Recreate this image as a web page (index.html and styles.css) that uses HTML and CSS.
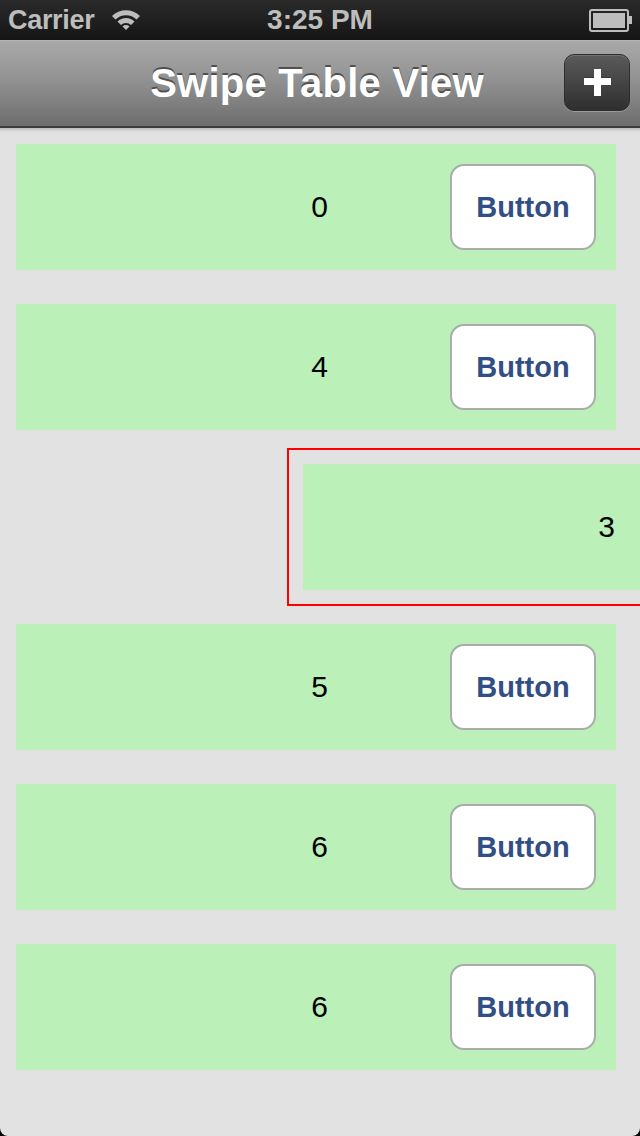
FILE: index.html
```html
<!DOCTYPE html>
<html>
<head>
<meta charset="utf-8">
<link rel="stylesheet" href="styles.css">
</head>
<body>
<div class="screen">
  <div class="statusbar">
    <div class="sb-left">
      <span class="carrier">Carrier</span>
      <svg class="wifi" width="32" height="24" viewBox="0 0 32 24">
        <path d="M2 9 A20 20 0 0 1 30 9 L26.5 12.5 A15 15 0 0 0 5.5 12.5 Z" fill="#bdbdbd"/>
        <path d="M7.5 14.5 A12 12 0 0 1 24.5 14.5 L21 18 A7 7 0 0 0 11 18 Z" fill="#bdbdbd"/>
        <path d="M12.5 19.5 A5 5 0 0 1 19.5 19.5 L16 23 Z" fill="#bdbdbd"/>
      </svg>
    </div>
    <span class="time">3:25 PM</span>
    <div class="battery"><div class="battery-body"><div class="battery-fill"></div></div><div class="battery-nub"></div></div>
  </div>
  <div class="navbar">
    <span class="title">Swipe Table View</span>
    <button class="add-btn"><span class="plus-h"></span><span class="plus-v"></span></button>
  </div>
  <div class="navshadow"></div>
  <div class="list">
    <div class="cell"><div class="card"><span class="num">0</span><span class="btn">Button</span></div></div>
    <div class="cell"><div class="card"><span class="num">4</span><span class="btn">Button</span></div></div>
    <div class="cell swiped"><div class="card"><span class="num">3</span></div></div>
    <div class="cell"><div class="card"><span class="num">5</span><span class="btn">Button</span></div></div>
    <div class="cell"><div class="card"><span class="num">6</span><span class="btn">Button</span></div></div>
    <div class="cell"><div class="card"><span class="num">6</span><span class="btn">Button</span></div></div>
  </div>
</div>
</body>
</html>
```
FILE: styles.css
```css
html, body {
  margin: 0;
  padding: 0;
  background: #000;
}
.screen {
  width: 640px;
  height: 1136px;
  overflow: hidden;
  background: #e2e2e2;
  font-family: "Liberation Sans", Arial, sans-serif;
  border-radius: 0 0 8px 8px;
}
.statusbar {
  height: 40px;
  background: linear-gradient(#2a2a2a, #151515);
  display: flex;
  align-items: center;
  justify-content: space-between;
  padding: 0 8px 0 8px;
  box-sizing: border-box;
  color: #bdbdbd;
  font-weight: bold;
  font-size: 27px;
  position: relative;
}
.sb-left {
  display: flex;
  align-items: center;
  gap: 16px;
}
.carrier { letter-spacing: -0.3px; }
.wifi { margin-top: -2px; }
.time {
  position: absolute;
  left: 0;
  right: 0;
  text-align: center;
  pointer-events: none;
  font-size: 28px;
}
.battery {
  display: flex;
  align-items: center;
}
.battery-body {
  width: 32px;
  height: 15px;
  border: 2px solid #bdbdbd;
  border-radius: 3px;
  padding: 2px;
  box-sizing: content-box;
  display: flex;
}
.battery-fill {
  flex: 1;
  background: #bdbdbd;
}
.battery-nub {
  width: 3px;
  height: 8px;
  background: #bdbdbd;
}
.navbar {
  height: 85px;
  background: linear-gradient(#a9a9a9 0%, #959595 40%, #6e6e6e 100%);
  border-top: 1px solid #b5b5b5;
  border-bottom: 2px solid #3c3c3c;
  box-sizing: content-box;
  display: flex;
  align-items: center;
  justify-content: center;
  position: relative;
}
.title {
  color: #fff;
  font-weight: bold;
  font-size: 40px;
  letter-spacing: 0.25px;
  text-shadow: 0 -2px 0 #505050;
  margin-left: -6px;
}
.add-btn {
  position: absolute;
  right: 10px;
  top: 13px;
  width: 66px;
  height: 57px;
  border-radius: 10px;
  border: 1px solid #2e2e2e;
  background: linear-gradient(#5a5a5a, #2f2f2f);
  box-shadow: 0 1px 0 rgba(255,255,255,0.25), inset 0 1px 0 rgba(255,255,255,0.15);
  padding: 0;
}
.plus-h, .plus-v {
  position: absolute;
  background: #fff;
  box-shadow: 0 -1px 0 #2a3a4a;
}
.plus-h {
  left: 19px;
  top: 23px;
  width: 27px;
  height: 7px;
}
.plus-v {
  left: 29px;
  top: 14px;
  width: 7px;
  height: 27px;
  box-shadow: none;
}
.navshadow {
  height: 4px;
  background: linear-gradient(#bdbdbd, #e2e2e2);
  margin-bottom: -4px;
}
.list {
  display: flex;
  flex-direction: column;
}
.cell {
  height: 160px;
  padding: 16px 24px 18px 16px;
  box-sizing: border-box;
}
.card {
  width: 600px;
  height: 126px;
  background: #bbf0b8;
  display: flex;
  align-items: center;
  flex-shrink: 0;
}
.num {
  font-size: 30px;
  color: #000;
  margin-left: 295px;
  width: 17px;
  text-align: center;
}
.btn {
  margin-left: auto;
  margin-right: 20px;
  width: 146px;
  height: 86px;
  box-sizing: border-box;
  border: 2px solid #ababab;
  border-radius: 14px;
  background: #fff;
  display: flex;
  align-items: center;
  justify-content: center;
  font-weight: bold;
  font-size: 29px;
  color: #324f85;
}
.swiped {
  margin-left: 287px;
  width: 400px;
  height: 158px;
  margin-bottom: 2px;
  border: 2px solid #ff0000;
  border-right: none;
  padding: 14px 0 0 14px;
}
```
